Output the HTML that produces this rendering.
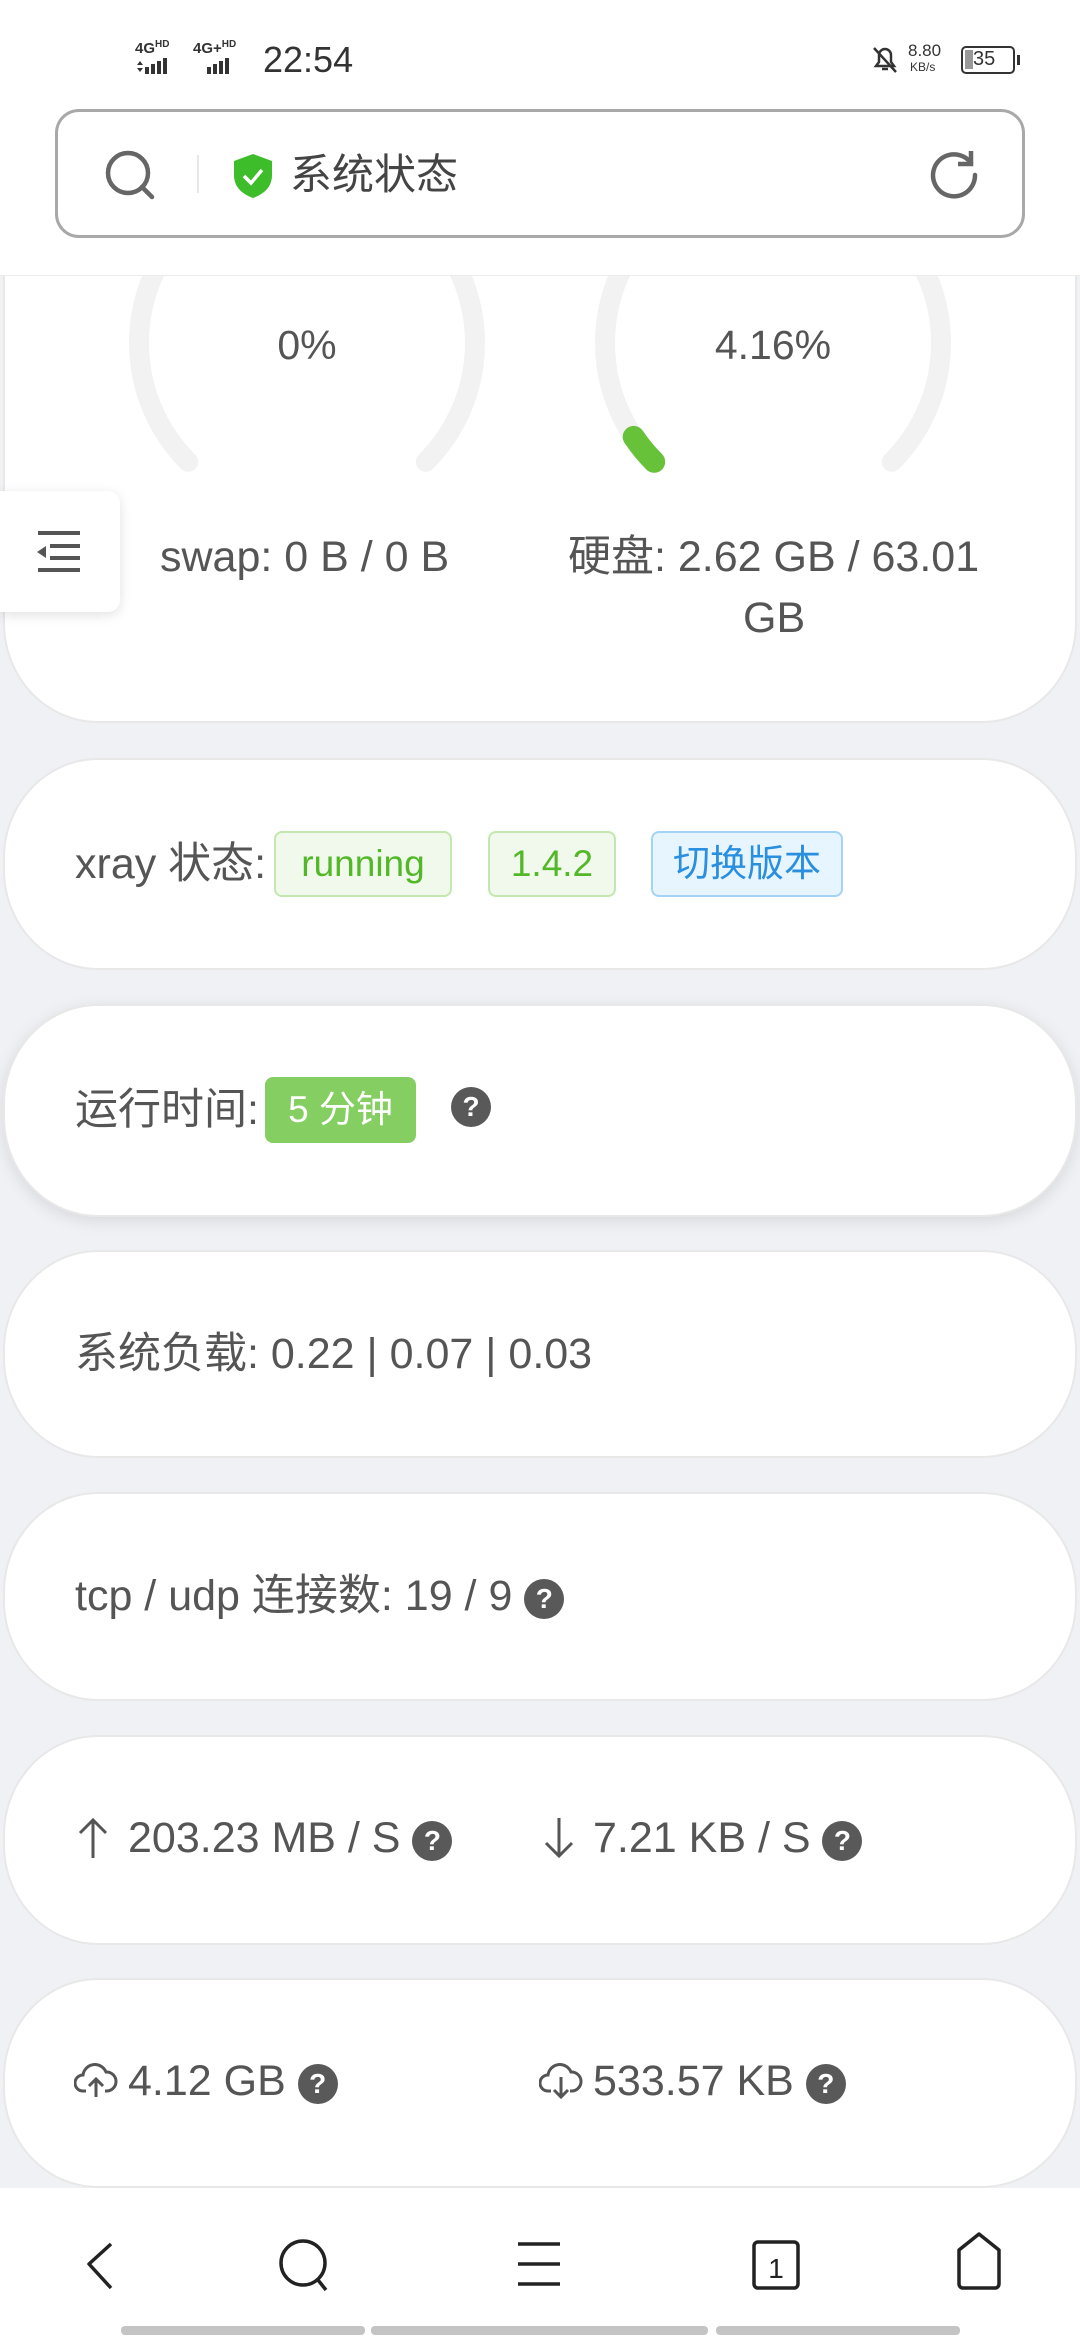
<!DOCTYPE html>
<html><head><meta charset="utf-8"><style>
*{margin:0;padding:0;box-sizing:border-box}
body{width:1080px;height:2340px;background:#f0f1f5;position:relative;overflow:hidden;font-family:"Liberation Sans","Noto Sans CJK SC",sans-serif;color:#555}
.abs{position:absolute}
.card{position:absolute;left:3px;width:1074px;background:#fff;border:2px solid #e8e8e8;border-radius:95px/100px}
.t{position:absolute;font-size:43px;line-height:1;white-space:nowrap;color:#555}
.q{display:inline-block;width:40px;height:40px;border-radius:50%;background:#595959;color:#fff;font-size:28px;font-weight:bold;text-align:center;line-height:40px;vertical-align:middle}
.tag{position:absolute;border-radius:8px;font-size:37px;text-align:center;white-space:nowrap}
</style></head><body>

<div class="card" style="top:-120px;height:843px"></div>
<svg class="abs" style="left:0;top:0" width="1080" height="760">
<path d="M188.2 461.8 A168 168 0 1 1 425.8 461.8" fill="none" stroke="#f2f2f2" stroke-width="20" stroke-linecap="round"/>
<path d="M654.2 461.8 A168 168 0 1 1 891.8 461.8" fill="none" stroke="#f2f2f2" stroke-width="20" stroke-linecap="round"/>
<path d="M654.2 461.8 A168 168 0 0 1 633.7 436.9" fill="none" stroke="#67c23a" stroke-width="22" stroke-linecap="round"/>
</svg>
<div class="t" style="left:0;width:614px;text-align:center;top:325px;font-size:41px">0%</div>
<div class="t" style="left:466px;width:614px;text-align:center;top:325px;font-size:41px">4.16%</div>
<div class="t" style="left:160px;top:536px">swap: 0 B / 0 B</div>
<div class="t" style="left:568px;top:536px">硬盘: 2.62 GB / 63.01</div>
<div class="t" style="left:743px;top:597px">GB</div>

<!-- header -->
<div class="abs" style="left:0;top:0;width:1080px;height:276px;background:#fff;border-bottom:1px solid #ececec"></div>
<div class="t" style="left:135px;top:40px;font-size:15px;font-weight:bold;color:#333">4G<sup style="font-size:10px">HD</sup></div>
<svg class="abs" style="left:135px;top:58px" width="120" height="18"><g fill="#333"><rect x="10" y="9" width="4" height="7"/><rect x="16" y="6" width="4" height="10"/><rect x="22" y="3" width="4" height="13"/><rect x="28" y="0" width="4" height="16"/><path d="M2 7l3-4 3 4zM2 10l3 4 3-4z"/><rect x="72" y="9" width="4" height="7"/><rect x="78" y="6" width="4" height="10"/><rect x="84" y="3" width="4" height="13"/><rect x="90" y="0" width="4" height="16"/></g></svg>
<div class="t" style="left:193px;top:40px;font-size:15px;font-weight:bold;color:#333">4G+<sup style="font-size:10px">HD</sup></div>
<div class="t" style="left:263px;top:42px;font-size:36px;color:#333">22:54</div>
<svg class="abs" style="left:870px;top:44px" width="30" height="32"><path d="M6 22h18l-3-4v-7a6 6 0 0 0-12 0v7z M12 25h6 M4 4l22 24" fill="none" stroke="#333" stroke-width="2.5"/></svg>
<div class="t" style="left:908px;top:42px;font-size:17px;color:#333">8.80</div>
<div class="t" style="left:910px;top:61px;font-size:12px;color:#333">KB/s</div>
<div class="abs" style="left:961px;top:46px;width:54px;height:28px;border:2.5px solid #333;border-radius:5px"><div style="position:absolute;left:2px;top:2px;width:8px;height:19px;background:#999"></div><div style="position:absolute;left:10px;top:0;font-size:20px;color:#333">35</div></div>
<div class="abs" style="left:1017px;top:55px;width:3px;height:10px;background:#333"></div>

<div class="abs" style="left:55px;top:109px;width:970px;height:129px;border:3px solid #a8a8a8;border-radius:24px"></div>
<svg class="abs" style="left:100px;top:145px" width="60" height="60"><circle cx="28" cy="28" r="20" fill="none" stroke="#666" stroke-width="4.5"/><path d="M42 42l10 10" stroke="#666" stroke-width="4.5" stroke-linecap="round"/></svg>
<div class="abs" style="left:197px;top:155px;width:2px;height:38px;background:#e8e8e8"></div>
<svg class="abs" style="left:231px;top:152px" width="44" height="48"><path d="M22 2L41 9v14c0 12-8 19-19 23C11 42 3 35 3 23V9z" fill="#3dbd2a"/><path d="M13 24l7 7 11-13" fill="none" stroke="#fff" stroke-width="3.5"/></svg>
<div class="t" style="left:290px;top:154px;font-size:42px;color:#444">系统状态</div>
<svg class="abs" style="left:925px;top:145px" width="60" height="60"><path d="M46 18A21 21 0 1 0 50 30" fill="none" stroke="#666" stroke-width="4.5" stroke-linecap="round"/><path d="M46 6v13h-13" fill="none" stroke="#666" stroke-width="4.5"/></svg>

<!-- sidebar button -->
<div class="abs" style="left:0;top:491px;width:120px;height:121px;background:#fff;border-radius:0 12px 12px 0;box-shadow:0 3px 12px rgba(0,0,0,.12)"></div>
<svg class="abs" style="left:36px;top:531px" width="46" height="42"><g fill="#555"><rect x="2" y="0" width="42" height="4"/><rect x="14" y="13" width="30" height="4"/><rect x="14" y="25" width="30" height="4"/><rect x="2" y="37" width="42" height="4"/><path d="M1 21l9-6v12z"/></g></svg>

<!-- card 2 -->
<div class="card" style="top:758px;height:212px"></div>
<div class="t" style="left:75px;top:843px">xray 状态:</div>
<div class="tag" style="left:274px;top:831px;width:178px;height:66px;line-height:62px;background:#f0f9eb;border:2px solid #c2e7b0;color:#52b828">running</div>
<div class="tag" style="left:488px;top:831px;width:128px;height:66px;line-height:62px;background:#f0f9eb;border:2px solid #c2e7b0;color:#52b828">1.4.2</div>
<div class="tag" style="left:651px;top:831px;width:192px;height:66px;line-height:62px;background:#e6f5ff;border:2px solid #a3d3f5;color:#2b8fe0">切换版本</div>

<!-- card 3 -->
<div class="card" style="top:1004px;height:213px;box-shadow:0 4px 16px rgba(0,0,0,.1)"></div>
<div class="t" style="left:75px;top:1089px">运行时间:</div>
<div class="tag" style="left:265px;top:1077px;width:151px;height:66px;line-height:66px;background:#85ce61;color:#fff">5 分钟</div>
<div class="abs" style="left:451px;top:1087px"><span class="q">?</span></div>

<!-- card 4 -->
<div class="card" style="top:1250px;height:208px"></div>
<div class="t" style="left:75px;top:1333px">系统负载: 0.22 | 0.07 | 0.03</div>

<!-- card 5 -->
<div class="card" style="top:1492px;height:209px"></div>
<div class="t" style="left:75px;top:1575px">tcp / udp 连接数: 19 / 9 <span class="q">?</span></div>

<!-- card 6 -->
<div class="card" style="top:1735px;height:210px"></div>
<svg class="abs" style="left:76px;top:1816px" width="34" height="44"><path d="M17 42V4 M4 17L17 4l13 13" fill="none" stroke="#555" stroke-width="3"/></svg>
<div class="t" style="left:128px;top:1817px">203.23 MB / S <span class="q">?</span></div>
<svg class="abs" style="left:542px;top:1816px" width="34" height="44"><path d="M17 2V40 M4 27l13 13 13-13" fill="none" stroke="#555" stroke-width="3"/></svg>
<div class="t" style="left:593px;top:1817px">7.21 KB / S <span class="q">?</span></div>

<!-- card 7 -->
<div class="card" style="top:1978px;height:210px"></div>
<svg class="abs" style="left:74px;top:2061px" width="44" height="40"><path d="M12 30H9a8 8 0 0 1 0-16 12 12 0 0 1 23-3 9 9 0 0 1 1 19h-2 M22 36V18 M15 25l7-7 7 7" fill="none" stroke="#555" stroke-width="3"/></svg>
<div class="t" style="left:128px;top:2060px">4.12 GB <span class="q">?</span></div>
<svg class="abs" style="left:539px;top:2061px" width="44" height="40"><path d="M12 30H9a8 8 0 0 1 0-16 12 12 0 0 1 23-3 9 9 0 0 1 1 19h-2 M22 16V36 M15 29l7 7 7-7" fill="none" stroke="#555" stroke-width="3"/></svg>
<div class="t" style="left:593px;top:2060px">533.57 KB <span class="q">?</span></div>

<!-- bottom nav -->
<div class="abs" style="left:0;top:2188px;width:1080px;height:152px;background:#fff"></div>
<svg class="abs" style="left:0;top:2220px" width="1080" height="90"><g fill="none" stroke="#222" stroke-width="3.5" stroke-linejoin="round"><path d="M111 24L89 44L111 68"/><circle cx="303" cy="43" r="22"/><path d="M318 60l8 10"/><path d="M518 24h42M518 44h42M518 64h42"/><rect x="754" y="22" width="44" height="46" rx="4"/><path d="M959 30l20-16 20 16v34a4 4 0 0 1-4 4h-32a4 4 0 0 1-4-4z"/></g><text x="776" y="58" font-size="28" text-anchor="middle" fill="#222" font-family="Liberation Sans">1</text></svg>
<div class="abs" style="left:121px;top:2326px;width:244px;height:9px;background:#c4c4c4;border-radius:4px"></div>
<div class="abs" style="left:371px;top:2326px;width:337px;height:9px;background:#c4c4c4;border-radius:4px"></div>
<div class="abs" style="left:716px;top:2326px;width:244px;height:9px;background:#c4c4c4;border-radius:4px"></div>
</body></html>
